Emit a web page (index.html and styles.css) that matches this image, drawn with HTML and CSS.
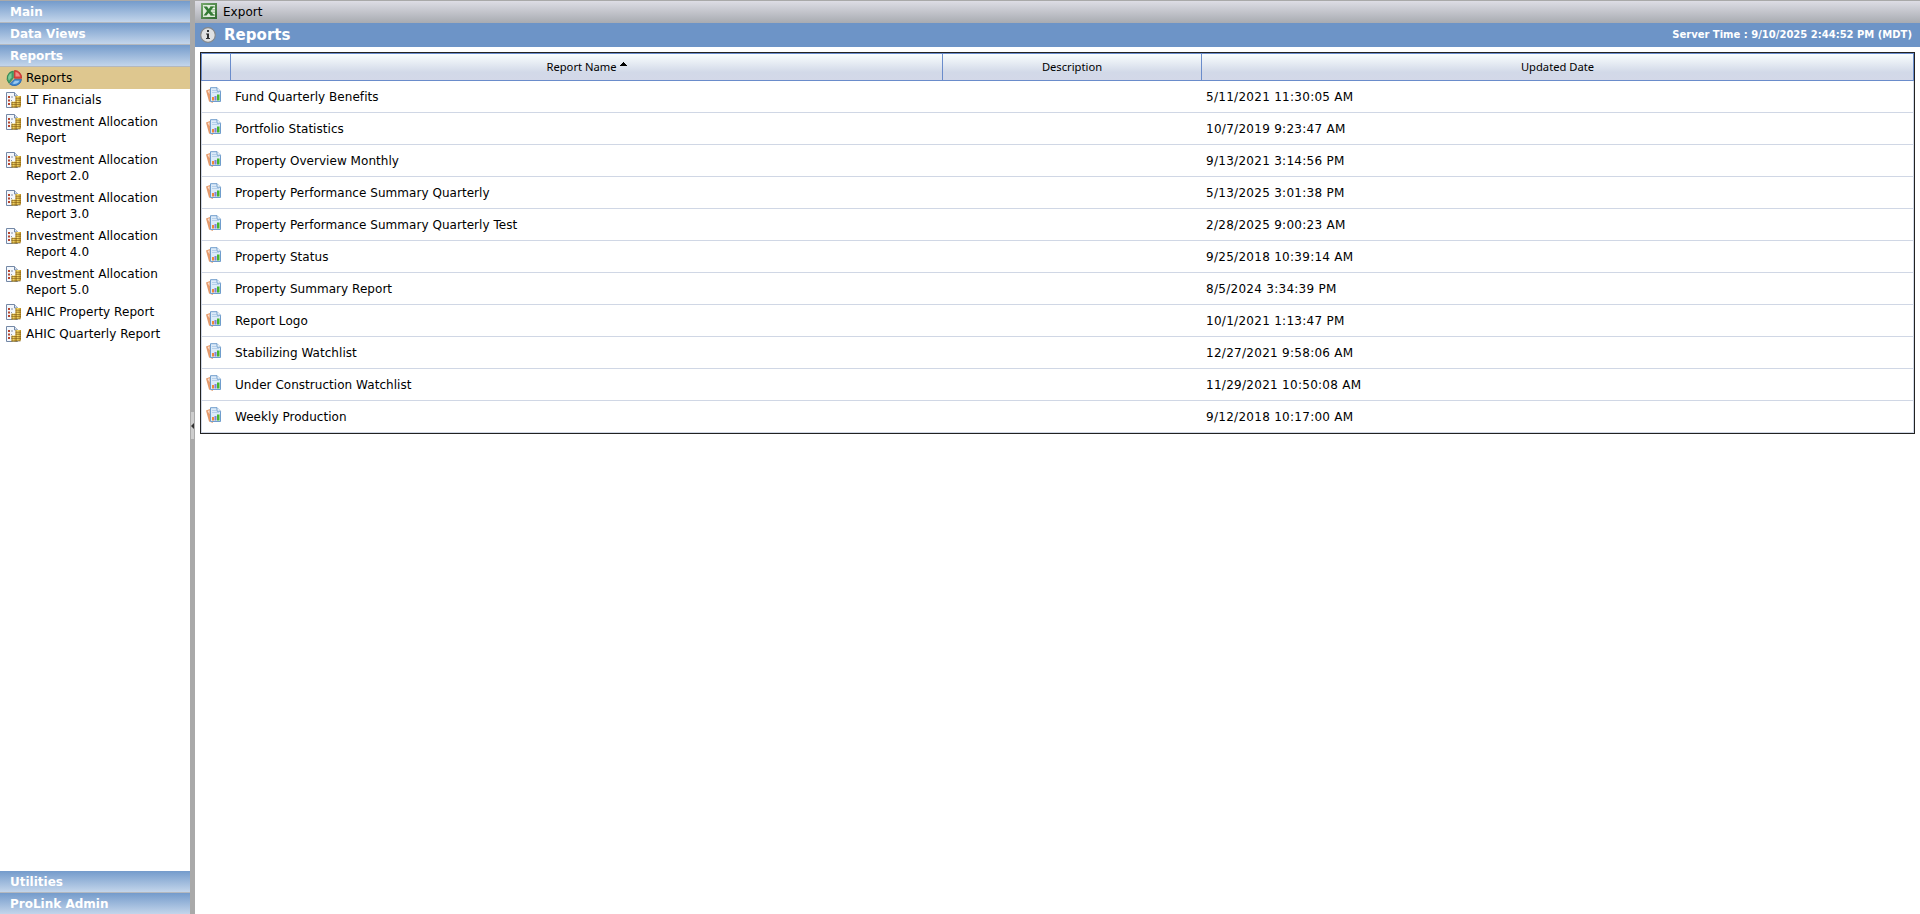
FILE: index.html
```
<!DOCTYPE html>
<html lang="en">
<head>
    <meta charset="UTF-8">
    <meta name="viewport" content="width=device-width, initial-scale=1.0">
    <title>Reports</title>
    <link rel="stylesheet" href="styles.css">
</head>

<body>

    <!-- shared icons -->
    <svg class="icon-defs" width="0" height="0">
        <linearGradient id="coinFill">
            <stop offset="0" stop-color="#b98a1e"/>
            <stop offset=".4" stop-color="#ffe773"/>
            <stop offset="1" stop-color="#b8891f"/>
        </linearGradient>
        <linearGradient id="excelFill" x2="1" y2="1">
            <stop offset="0" stop-color="#76a86c"/>
            <stop offset="1" stop-color="#2f6a2f"/>
        </linearGradient>
        <symbol id="icon-coins" viewBox="0 0 16 16">
            <path d="M.5.5h8l3 3.500v11.500H.5z" fill="#f3f7fc" stroke="#7488a6"/>
            <path d="M8.500.5v3.500h3" fill="#dbe6f3" stroke="#7488a6"/>
            <path d="M2 4h2v2H2zM2 7.500h2v2H2zM2 11h2v2H2z" fill="#b5452f"/>
            <path d="M5 5h2M5 8.500h1M5 12h1" stroke="#8b94a4"/>
            <path d="M9.500 4h5.500v10l-1 1H9.500z" fill="url(#coinFill)"/>
            <path d="M5.500 9.500h5v6h-5z" fill="url(#coinFill)"/>
            <path d="M9.500 6.200h5.500M9.500 8.200h5.500M5.500 10.700h9.500M5.500 12.700h9.500M5.500 14.900h9" stroke="#7d5a18" stroke-width=".8"/>
        </symbol>
        <symbol id="icon-report" viewBox="0 0 16 16">
            <path d="M0 3.500L4 2v12l3 1.200V16L3 14.500z" fill="#e59a6c"/>
            <path d="M1.500 4l2-.8v4z" fill="#fbe0cd"/>
            <path d="M4.500.7h6.500l3.500 3.500v10.300h-10z" fill="#dcebf9" stroke="#6f9dcc"/>
            <path d="M11 .7v3.500h3.500" fill="#fff" stroke="#6f9dcc"/>
            <path d="M6 3.500h4M6 5.500h7" stroke="#b6cfe9"/>
            <path d="M6 10h2v3.500H6z" fill="#ef8a36"/>
            <path d="M8.500 9h2v4.500h-2z" fill="#8580d0"/>
            <path d="M11 7.500h2.500v6H11z" fill="#43b72c"/>
        </symbol>
    </svg>

    <div class="page">
        <div class="sidebar">
            <div class="menu-header">Main</div>
            <div class="menu-header">Data Views</div>
            <div class="menu-header">Reports</div>

            <ul class="menu-list">
                <li class="active">
                    <svg class="icon" viewBox="0 0 16 16">
                        <path d="M7.300 1v7L3 13.200A7.300 7.300 0 0 1 7.300 1z" fill="#45a06a" stroke="#277947" stroke-width=".7"/>
                        <path d="M5.500 3v4.500L3 10.500A5 5 0 0 1 5.500 3z" fill="#7fcb98"/>
                        <path d="M8.500.4a7.200 7.200 0 0 1 7.100 7.900H8.500z" fill="#e0423f" stroke="#b52728" stroke-width=".7"/>
                        <path d="M9.500 2a5.500 5.500 0 0 1 4.500 4.500H9.500z" fill="#f08e86"/>
                        <path d="M8.400 9.400h7.200A7.300 7.300 0 0 1 3.600 13.900z" fill="#4189d0" stroke="#245ea4" stroke-width=".7"/>
                        <path d="M9 10.700h4.500a5.500 5.500 0 0 1-7 2.800z" fill="#9bc9f0"/>
                    </svg>
                    <span>Reports</span>
                </li>
                <li><svg class="icon"><use href="#icon-coins"/></svg><span>LT Financials</span></li>
                <li><svg class="icon"><use href="#icon-coins"/></svg><span>Investment Allocation Report</span></li>
                <li><svg class="icon"><use href="#icon-coins"/></svg><span>Investment Allocation Report 2.0</span></li>
                <li><svg class="icon"><use href="#icon-coins"/></svg><span>Investment Allocation Report 3.0</span></li>
                <li><svg class="icon"><use href="#icon-coins"/></svg><span>Investment Allocation Report 4.0</span></li>
                <li><svg class="icon"><use href="#icon-coins"/></svg><span>Investment Allocation Report 5.0</span></li>
                <li><svg class="icon"><use href="#icon-coins"/></svg><span>AHIC Property Report</span></li>
                <li><svg class="icon"><use href="#icon-coins"/></svg><span>AHIC Quarterly Report</span></li>
            </ul>

            <div class="menu-header">Utilities</div>
            <div class="menu-header last">ProLink Admin</div>
        </div>

        <div class="splitter">
            <div class="grip"><div class="arrow"></div></div>
        </div>

        <div class="content">
            <div class="toolbar">
                <svg class="icon" viewBox="0 0 16 16">
                    <path d="M0 0h16v16H0z" fill="url(#excelFill)"/>
                    <path d="M2 2h12v12H2z" fill="#dfecdb"/>
                    <path d="M9 3h5v10H9z" fill="#a9caa2"/>
                    <path d="M9 5.500h5M9 8h5M9 10.500h5" stroke="#f4f9f3"/>
                    <path d="M2.500 3.500H6L7.700 6l2-2.500h3.300L9.500 8l4 4.500H10L7.500 10l-2 2.500h-3L6 8z" fill="#347b35"/>
                </svg>
                <span>Export</span>
            </div>

            <div class="title-bar">
                <svg class="icon" viewBox="0 0 16 16">
                    <circle cx="8" cy="8" r="7.300" fill="#e0e1e2" stroke="#858789" stroke-width="1.200"/>
                    <path d="M7 3h2v2H7zM6 6.500h3V11h1v1H6v-1h1V7.500H6z" fill="#303234"/>
                </svg>
                <h1>Reports</h1>
                <div class="server-time">Server Time : 9/10/2025 2:44:52 PM (MDT)</div>
            </div>

            <div class="grid">
                <div class="row head">
                    <div></div>
                    <div>Report Name<svg class="sort" viewBox="0 0 7 4" shape-rendering="crispEdges"><path d="M3 0h1v1h1v1h1v1h1v1H0V3h1V2h1V1h1z"/></svg></div>
                    <div>Description</div>
                    <div>Updated Date</div>
                </div>
                <div class="row"><div><svg class="icon"><use href="#icon-report"/></svg></div><div>Fund Quarterly Benefits</div><div></div><div class="date">5/11/2021 11:30:05 AM</div></div>
                <div class="row"><div><svg class="icon"><use href="#icon-report"/></svg></div><div>Portfolio Statistics</div><div></div><div class="date">10/7/2019 9:23:47 AM</div></div>
                <div class="row"><div><svg class="icon"><use href="#icon-report"/></svg></div><div>Property Overview Monthly</div><div></div><div class="date">9/13/2021 3:14:56 PM</div></div>
                <div class="row"><div><svg class="icon"><use href="#icon-report"/></svg></div><div>Property Performance Summary Quarterly</div><div></div><div class="date">5/13/2025 3:01:38 PM</div></div>
                <div class="row"><div><svg class="icon"><use href="#icon-report"/></svg></div><div>Property Performance Summary Quarterly Test</div><div></div><div class="date">2/28/2025 9:00:23 AM</div></div>
                <div class="row"><div><svg class="icon"><use href="#icon-report"/></svg></div><div>Property Status</div><div></div><div class="date">9/25/2018 10:39:14 AM</div></div>
                <div class="row"><div><svg class="icon"><use href="#icon-report"/></svg></div><div>Property Summary Report</div><div></div><div class="date">8/5/2024 3:34:39 PM</div></div>
                <div class="row"><div><svg class="icon"><use href="#icon-report"/></svg></div><div>Report Logo</div><div></div><div class="date">10/1/2021 1:13:47 PM</div></div>
                <div class="row"><div><svg class="icon"><use href="#icon-report"/></svg></div><div>Stabilizing Watchlist</div><div></div><div class="date">12/27/2021 9:58:06 AM</div></div>
                <div class="row"><div><svg class="icon"><use href="#icon-report"/></svg></div><div>Under Construction Watchlist</div><div></div><div class="date">11/29/2021 10:50:08 AM</div></div>
                <div class="row"><div><svg class="icon"><use href="#icon-report"/></svg></div><div>Weekly Production</div><div></div><div class="date">9/12/2018 10:17:00 AM</div></div>
            </div>
        </div>
    </div>

</body>
</html>
```
FILE: styles.css
```
* {
    margin: 0;
    padding: 0;
    box-sizing: border-box;
}

body {
    font-family: Verdana, "DejaVu Sans", sans-serif;
    font-size: 12px;
    line-height: 16px;
    letter-spacing: 0.04px;
    color: #000;
    background: #fff;
    overflow: hidden;
}

.icon-defs {
    position: absolute;
}

.icon {
    display: block;
    width: 16px;
    height: 16px;
    flex: none;
}

.page {
    display: flex;
    height: 100vh;
    border-top: 1px solid #a9a9a9;
}

/* left menu */
.sidebar {
    display: flex;
    flex-direction: column;
    width: 190px;
}

.menu-header {
    height: 22px;
    padding: 3px 10px 0;
    border-bottom: 1px solid #b4b8be;
    background: linear-gradient(#749bcb, #c3d5eb);
    color: #fff;
    font-weight: bold;
    letter-spacing: 0;
    flex: none;
}

.menu-header.last {
    height: 21px;
    border-bottom: none;
}

.menu-list {
    flex: 1;
    list-style: none;
}

.menu-list li {
    display: flex;
    gap: 4px;
    padding: 3px 20px 3px 6px;
}

.menu-list li.active {
    background: #dec78f;
}

.splitter {
    display: flex;
    align-items: center;
    width: 5px;
    padding: 0 1px;
    background: #a9a9a9;
}

.grip {
    display: flex;
    align-items: center;
    width: 3px;
    height: 27px;
    margin-top: -64px;
    background: #cdcdcd;
}

.arrow {
    border: 3px solid transparent;
    border-left: none;
    border-right-color: #333;
}

/* right side */
.content {
    flex: 1;
    min-width: 0;
}

.toolbar {
    display: flex;
    gap: 6px;
    height: 22px;
    padding: 2px 6px;
    background: linear-gradient(#dddde5, #a8abb1);
}

.toolbar span {
    padding-top: 1px;
}

.title-bar {
    display: flex;
    align-items: center;
    height: 24px;
    padding: 0 8px 0 5px;
    background: #6d94c7;
    color: #fff;
}

.title-bar h1 {
    margin-left: 8px;
    padding-top: 1px;
    font-size: 15px;
    line-height: 23px;
}

.server-time {
    margin-left: auto;
    font-size: 10px;
    font-weight: bold;
    letter-spacing: 0;
}

.grid {
    margin: 5px 5px 0;
    border: 1px solid #222;
}

.row {
    display: grid;
    grid-template-columns: 28px 712px 259px 1fr;
    height: 32px;
    border: 1px solid #d0d7e5;
    border-top: none;
}

.row > div {
    padding: 8px 5px 0;
}

.row > div:first-child {
    padding: 6px 4px 0;
}

.row .date {
    letter-spacing: 0.28px;
}

.row.head {
    height: 28px;
    border: 1px solid #6a8ccb;
    background: linear-gradient(#fafefe, #d2d9e8 70%, #d3d8e8);
    font-family: Tahoma, "Noto Sans", sans-serif;
    font-size: 11.2px;
    letter-spacing: 0;
    text-align: center;
}

.row.head > div {
    padding-top: 5px;
    border-left: 1px solid #6a8ccb;
}

.row.head > div:first-child {
    border-left: none;
}

.sort {
    width: 7px;
    height: 4px;
    margin-left: 3px;
    vertical-align: 5px;
}
```
